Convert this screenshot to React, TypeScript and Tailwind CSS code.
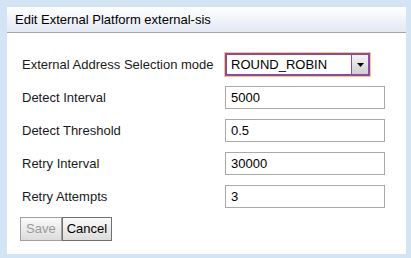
import React, { type FC } from "react";

const rows = [
  { label: "Detect Interval", value: "5000" },
  { label: "Detect Threshold", value: "0.5" },
  { label: "Retry Interval", value: "30000" },
  { label: "Retry Attempts", value: "3" },
];

const App: FC = () => {
  return (
    <div className="w-[411px] h-[258px] bg-[#d3e4f5] p-[7px] pr-[5px] pb-[4px] font-['Liberation_Sans',Arial,sans-serif] text-[13px] text-[#1a1a1a]">
      <div className="h-full bg-white flex flex-col">
        {/* header */}
        <div className="h-[26px] flex items-center pl-[8px] border-b border-[#a6a6a6] bg-gradient-to-b from-white to-[#e3e8f4] text-[13px] text-black">
          Edit External Platform external-sis
        </div>

        <div className="flex flex-col pl-[15px] pt-[20px]">
          <div className="flex items-center h-[23px]">
            <label className="w-[203px] shrink-0">External Address Selection mode</label>
            <div className="w-[145px] h-[23px] border-2 border-[#8b4aa6] outline outline-1 outline-[#f6c77a] flex items-center">
              <span className="flex-1 pl-[4px] text-black">ROUND_ROBIN</span>
              <div className="w-[17px] h-full bg-gradient-to-b from-[#f4f4f4] to-[#cfcfcf] border-l border-[#8b4aa6] flex items-center justify-center">
                <svg width="7" height="4" viewBox="0 0 7 4">
                  <path d="M0 0 H7 L3.5 4 Z" fill="#000" />
                </svg>
              </div>
            </div>
          </div>

          {rows.map((r) => (
            <div key={r.label} className="flex items-center h-[23px] mt-[10px]">
              <label className="w-[203px] shrink-0">{r.label}</label>
              <div className="w-[160px] h-[23px] border border-[#a9a9a9] flex items-center pl-[5px] text-black">
                {r.value}
              </div>
            </div>
          ))}

          <div className="flex mt-[9px] -ml-[2px]">
            <button className="h-[24px] px-[5px] border border-[#a0a0a0] bg-gradient-to-b from-[#fafafa] to-[#dcdcdc] text-[#9a9a9a]">
              Save
            </button>
            <button className="h-[24px] px-[4px] border border-[#707070] bg-gradient-to-b from-[#fafafa] to-[#dcdcdc] text-black">
              Cancel
            </button>
          </div>
        </div>
      </div>
    </div>
  );
};

export default App;
